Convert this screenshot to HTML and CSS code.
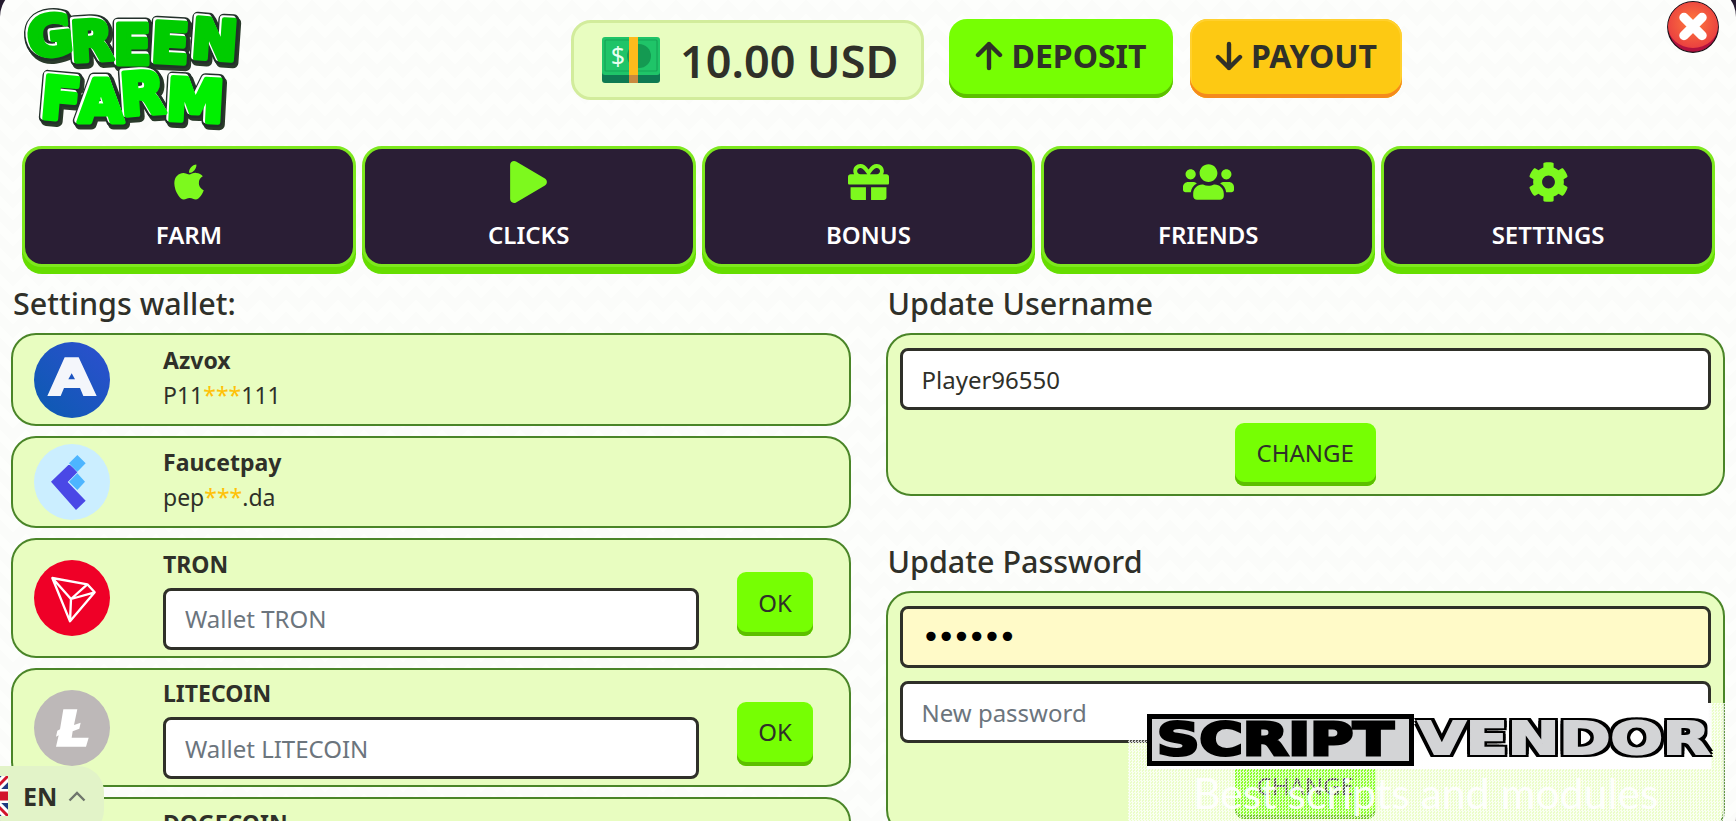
FILE: index.html
```html
<!DOCTYPE html>
<html lang="en">
<head>
<meta charset="utf-8">
<title>Green Farm - Settings</title>
<link rel="stylesheet" href="styles.css">
</head>
<body>
<div class="modal">
  <header class="topbar">
    <svg class="logo" viewBox="0 0 222 126" width="222" height="126" role="img" aria-label="Green Farm">
      <defs>
        <text id="lg" class="logo-green" x="7 49 91 128 168" y="49 53 55 53 49" rotate="-6 -3 0 3 4">GREEN</text>
        <text id="lf" class="logo-farm" x="17 56 99 143" y="109 113 107 111" rotate="5 0 -4 3">FARM</text>
      </defs>
      <use href="#lg" class="lay-shadow"/><use href="#lf" class="lay-shadow"/>
      <use href="#lg" class="lay-dark"/><use href="#lf" class="lay-dark"/>
      <use href="#lg" class="lay-white"/><use href="#lf" class="lay-white"/>
      <use href="#lg" class="lay-g1"/><use href="#lf" class="lay-g2"/>
    </svg>
    <div class="actions">
      <div class="balance">
        <svg class="cash" viewBox="0 0 58 46" width="58" height="46">
          <rect x="0" y="4" width="58" height="42" rx="3" fill="#0e7a52"/>
          <rect x="0" y="0" width="58" height="38" rx="3" fill="#1fc468"/>
          <rect x="3" y="3" width="52" height="31" rx="1" fill="none" stroke="#16a457" stroke-width="1.2"/>
          <circle cx="37" cy="19" r="12" fill="#149a52"/>
          <rect x="27" y="0" width="9" height="38" fill="#fdbb1c"/>
          <rect x="27" y="38" width="9" height="8" fill="#c98a3e"/>
          <text class="cash-sign" x="16" y="28">$</text>
        </svg>
        <span class="balance-text">10.00 USD</span>
      </div>
      <button class="cta cta-deposit">
        <svg viewBox="0 0 28 30" width="28" height="30"><path d="M14 27V3M3 14 14 3l11 11" fill="none" stroke="#2f3029" stroke-width="4.4" stroke-linecap="round" stroke-linejoin="round"/></svg>
        <span>DEPOSIT</span>
      </button>
      <button class="cta cta-payout">
        <svg viewBox="0 0 28 30" width="28" height="30"><path d="M14 3v24M3 16l11 11 11-11" fill="none" stroke="#2f3029" stroke-width="4.4" stroke-linecap="round" stroke-linejoin="round"/></svg>
        <span>PAYOUT</span>
      </button>
    </div>
    <button class="close" aria-label="Close">
      <svg viewBox="0 0 52 52" width="52" height="52">
        <defs>
          <radialGradient id="rg" cx="50%" cy="45%" r="55%"><stop offset="0" stop-color="#ff7b3c"/><stop offset="1" stop-color="#ea4040"/></radialGradient>
        </defs>
        <circle cx="26" cy="26" r="25.3" fill="#b3123f" stroke="#1c1016" stroke-width="1.2"/>
        <path d="M26 1a25 25 0 0 1 25 24 25 22 0 0 1-50 0A25 25 0 0 1 26 1z" fill="url(#rg)"/>
        <path d="M17 16.500 35 34.500M35 16.500 17 34.500" stroke="#fff" stroke-width="9.5" stroke-linecap="round"/>
      </svg>
    </button>
  </header>

  <nav class="nav">
    <a class="nav-card">
      <svg class="nav-ico" viewBox="0 0 384 512" width="30" height="38"><path d="M318.7 268.7c-.2-36.7 16.4-64.4 50-84.8-18.8-26.9-47.2-41.7-84.7-44.6-35.5-2.8-74.3 20.7-88.5 20.7-15 0-49.4-19.7-76.4-19.7C63.3 141.2 4 184.8 4 273.5q0 39.3 14.4 81.2c12.8 36.7 59 126.7 107.2 125.2 25.2-.6 43-17.9 75.8-17.9 31.8 0 48.3 17.9 76.4 17.9 48.6-.7 90.4-82.5 102.6-119.3-65.2-30.7-61.7-90-61.7-91.9zm-56.6-164.2c27.3-32.4 24.8-61.9 24-72.5-24.1 1.4-52 16.4-67.9 34.9-17.5 19.8-27.8 44.3-25.6 71.9 26.1 2 49.9-11.4 69.5-34.3z"/></svg>
      <span>FARM</span>
    </a>
    <a class="nav-card">
      <svg class="nav-ico" viewBox="0 0 448 512" width="37" height="42"><path d="M424.4 214.7L72.4 6.6C43.8-10.3 0 6.1 0 47.9V464c0 37.5 40.7 60.1 72.4 41.3l352-208c31.4-18.5 31.5-64.1 0-82.6z"/></svg>
      <span>CLICKS</span>
    </a>
    <a class="nav-card">
      <svg class="nav-ico" viewBox="0 0 512 512" width="41" height="41"><path d="M32 448c0 17.7 14.3 32 32 32h160V320H32v128zm256 32h160c17.7 0 32-14.3 32-32V320H288v160zm192-320h-42.1c6.2-12.1 10.1-25.5 10.1-40 0-48.5-39.5-88-88-88-41.6 0-68.5 21.3-103 68.3-34.5-47-61.4-68.3-103-68.3-48.5 0-88 39.5-88 88 0 14.5 3.8 27.9 10.1 40H32c-17.7 0-32 14.3-32 32v80c0 8.8 7.2 16 16 16h480c8.8 0 16-7.2 16-16v-80c0-17.7-14.3-32-32-32zm-326.1 0c-22.1 0-40-17.9-40-40s17.9-40 40-40c19.9 0 34.6 3.3 86.1 80h-86.1zm206.1 0h-86.1c51.4-76.5 65.7-80 86.1-80 22.1 0 40 17.9 40 40s-17.9 40-40 40z"/></svg>
      <span>BONUS</span>
    </a>
    <a class="nav-card">
      <svg class="nav-ico" viewBox="0 0 640 512" width="51" height="41"><path d="M96 224c35.3 0 64-28.7 64-64s-28.7-64-64-64-64 28.7-64 64 28.7 64 64 64zm448 0c35.3 0 64-28.7 64-64s-28.7-64-64-64-64 28.7-64 64 28.7 64 64 64zm32 32h-64c-17.6 0-33.5 7.1-45.1 18.6 40.3 22.1 68.9 62 75.1 109.4h66c17.7 0 32-14.3 32-32v-32c0-35.3-28.7-64-64-64zm-256 0c61.9 0 112-50.1 112-112S381.9 32 320 32 208 82.1 208 144s50.1 112 112 112zm76.8 32h-8.3c-20.8 10-43.9 16-68.5 16s-47.6-6-68.5-16h-8.3C179.6 288 128 339.6 128 403.2V432c0 26.5 21.5 48 48 48h288c26.5 0 48-21.5 48-48v-28.8c0-63.6-51.6-115.2-115.2-115.2zm-223.7-13.4C161.5 263.1 145.6 256 128 256H64c-35.3 0-64 28.7-64 64v32c0 17.7 14.3 32 32 32h65.9c6.3-47.4 34.9-87.3 75.2-109.4z"/></svg>
      <span>FRIENDS</span>
    </a>
    <a class="nav-card">
      <svg class="nav-ico" viewBox="0 0 512 512" width="41" height="41"><path d="M487.4 315.7l-42.6-24.6c4.3-23.2 4.3-47 0-70.2l42.6-24.6c4.9-2.8 7.1-8.6 5.5-14-11.1-35.6-30-67.8-54.7-94.6-3.8-4.1-10-5.1-14.8-2.3L380.8 110c-17.9-15.4-38.5-27.3-60.8-35.1V25.8c0-5.6-3.9-10.5-9.4-11.7-36.7-8.2-74.3-7.8-109.2 0-5.5 1.2-9.4 6.1-9.4 11.7V75c-22.2 7.9-42.8 19.8-60.8 35.1L88.7 85.5c-4.9-2.8-11-1.9-14.8 2.3-24.7 26.7-43.6 58.9-54.7 94.6-1.7 5.4.6 11.2 5.5 14L67.3 221c-4.3 23.2-4.3 47 0 70.2l-42.6 24.6c-4.9 2.8-7.1 8.6-5.5 14 11.1 35.6 30 67.8 54.7 94.6 3.8 4.1 10 5.1 14.8 2.3l42.6-24.6c17.9 15.4 38.5 27.3 60.8 35.1v49.2c0 5.6 3.9 10.5 9.4 11.7 36.7 8.2 74.3 7.8 109.2 0 5.5-1.2 9.4-6.1 9.4-11.7v-49.2c22.2-7.9 42.8-19.8 60.8-35.1l42.6 24.6c4.9 2.8 11 1.9 14.8-2.3 24.7-26.7 43.6-58.9 54.7-94.6 1.5-5.5-.7-11.3-5.6-14.1zM256 336c-44.1 0-80-35.9-80-80s35.9-80 80-80 80 35.9 80 80-35.9 80-80 80z"/></svg>
      <span>SETTINGS</span>
    </a>
  </nav>

  <main class="columns">
    <section>
      <h2 class="title">Settings wallet:</h2>

      <div class="panel row">
        <div class="coin-col">
          <svg class="coin" viewBox="0 0 228 228" width="76" height="76">
            <defs><linearGradient id="az" x1="0" y1="1" x2="1" y2="0"><stop offset="0" stop-color="#0a5bb0"/><stop offset="1" stop-color="#2e4fd0"/></linearGradient></defs>
            <circle cx="114" cy="114" r="114" fill="url(#az)"/>
            <path fill="#f4f6fb" fill-rule="evenodd" d="M92 46h42l54 116h-40l-10-24H90l-10 24H40zM113 94l-10 18h20z"/>
          </svg>
        </div>
        <div class="row-body row-body-text">
          <div class="coin-name">Azvox</div>
          <div class="coin-val">P11<span class="stars">***</span>111</div>
        </div>
      </div>

      <div class="panel row">
        <div class="coin-col">
          <svg class="coin" viewBox="0 0 228 228" width="76" height="76">
            <circle cx="114" cy="114" r="114" fill="#cbeeff"/>
            <path fill="#4db5ff" d="M130 33l25 25-25 25-25-25zM130 88l23 25-23 25-25-25z"/>
            <path fill="#4a48e6" d="M103 63 51 113l75 85 29-28-54-56 29-29-12-13-10-9z"/>
          </svg>
        </div>
        <div class="row-body row-body-text">
          <div class="coin-name">Faucetpay</div>
          <div class="coin-val">pep<span class="stars">***</span>.da</div>
        </div>
      </div>

      <div class="panel row">
        <div class="coin-col">
          <svg class="coin" viewBox="0 0 228 228" width="76" height="76">
            <circle cx="114" cy="114" r="114" fill="#ef0027"/>
            <path fill="none" stroke="#fff" stroke-width="7" stroke-linejoin="round" d="M55 54l105 19 22 24-74 87zM55 54l56 63-3 67M111 117l71-20M111 117l49-44"/>
          </svg>
        </div>
        <div class="row-body">
          <div class="coin-name">TRON</div>
          <input class="field" type="text" placeholder="Wallet TRON">
        </div>
        <button class="btn btn-ok">OK</button>
      </div>

      <div class="panel row">
        <div class="coin-col">
          <svg class="coin" viewBox="0 0 228 228" width="76" height="76">
            <circle cx="114" cy="114" r="114" fill="#bdb8b8"/>
            <path fill="#fff" d="M88 58h42l-10 47 20-7-4 18-20 8-3 19h51l-8 27H66l8-34-8 4 4-18 8-4z"/>
          </svg>
        </div>
        <div class="row-body">
          <div class="coin-name">LITECOIN</div>
          <input class="field" type="text" placeholder="Wallet LITECOIN">
        </div>
        <button class="btn btn-ok">OK</button>
      </div>

      <div class="panel row">
        <div class="coin-col"></div>
        <div class="row-body">
          <div class="coin-name">DOGECOIN</div>
          <input class="field" type="text" placeholder="Wallet DOGECOIN">
        </div>
        <button class="btn btn-ok">OK</button>
      </div>
    </section>

    <section>
      <h2 class="title">Update Username</h2>
      <form class="panel form">
        <input class="field" type="text" value="Player96550">
        <button class="btn btn-change" type="button">CHANGE</button>
      </form>

      <h2 class="title title-gap">Update Password</h2>
      <form class="panel form form-last">
        <input class="field field-auto" type="password" value="123456">
        <input class="field" type="password" placeholder="New password">
        <button class="btn btn-change" type="button">CHANGE</button>
      </form>
    </section>
  </main>

  <div class="lang">
    <svg class="flag" viewBox="0 0 40 40" width="40" height="40">
      <rect width="40" height="40" rx="6" fill="#1f3a80"/>
      <path d="M0 0 40 40M40 0 0 40" stroke="#fff" stroke-width="9"/>
      <path d="M0 0 40 40M40 0 0 40" stroke="#d2142c" stroke-width="3"/>
      <path d="M20 0V40M0 20H40" stroke="#fff" stroke-width="14"/>
      <path d="M20 0V40M0 20H40" stroke="#d2142c" stroke-width="9"/>
    </svg>
    <span class="lang-code">EN</span>
    <svg class="chev" viewBox="0 0 18 11" width="18" height="11"><path d="M1.500 9.500 9 2l7.500 7.500" fill="none" stroke="#6f756c" stroke-width="2.4"/></svg>
  </div>

  <aside class="watermark">
    <div class="wm-logo">
      <span class="wm-script"><span class="wm-script-text">SCRIPT</span></span>
      <span class="wm-vendor"><span class="wm-vendor-text">VENDOR</span></span>
    </div>
    <div class="wm-tag">Best scripts and modules</div>
  </aside>
</div>
</body>
</html>
```

FILE: styles.css
```css
* { box-sizing: border-box; }

html, body {
  margin: 0;
  height: 100%;
  overflow: hidden;
  background: #241a2e;
}

body {
  font-family: "Noto Sans", "Open Sans", sans-serif;
  color: #2f3029;
}

.modal {
  position: relative;
  height: 860px;
  margin-top: -13px;
  padding-top: 13px;
  border-radius: 30px;
  overflow: hidden;
  background-color: #fdfefc;
  background-image:
    linear-gradient(135deg, #fbfcfa 25%, transparent 25%),
    linear-gradient(225deg, #fbfcfa 25%, transparent 25%),
    linear-gradient(315deg, #fbfcfa 25%, transparent 25%),
    linear-gradient(45deg, #fbfcfa 25%, transparent 25%);
  background-position: -13px 0, -13px 0, 0 0, 0 0;
  background-size: 26px 26px;
}

/* top bar */
.topbar {
  display: flex;
  align-items: flex-start;
  height: 146px;
  padding-left: 22px;
}

.logo {
  flex: none;
  margin-top: 8px;
}

.logo text {
  font-family: "DejaVu Sans", sans-serif;
  font-weight: 700;
  stroke-linejoin: round;
  stroke-linecap: round;
}

.logo-green { font-size: 55px; }
.logo-farm { font-size: 58px; }

.lay-shadow {
  fill: #2a3a2a;
  stroke: #2a3a2a;
  stroke-width: 11px;
  transform: translate(2px, 3px);
}

.lay-dark {
  fill: #2a3a2a;
  stroke: #23302a;
  stroke-width: 11px;
}

.lay-white {
  fill: #fff;
  stroke: #fff;
  stroke-width: 6px;
  transform: translate(-1px, -1px);
}

.lay-g1 {
  fill: #00cc00;
  stroke: #00cc00;
  stroke-width: 5px;
  transform: translate(.5px, .5px);
}

.lay-g2 {
  fill: #00f000;
  stroke: #00f000;
  stroke-width: 5px;
  transform: translate(.5px, .5px);
}

.actions {
  display: flex;
  align-items: flex-start;
  margin: 19px 0 0 327px;
}

.balance {
  display: flex;
  align-items: center;
  width: 353px;
  height: 80px;
  margin-top: 1px;
  margin-right: 25px;
  padding-left: 28px;
  background: #e8fdc0;
  border: 3px solid #d2ec9c;
  border-radius: 20px;
}

.cash { flex: none; }

.cash-sign {
  font-family: "Noto Sans", sans-serif;
  font-size: 25px;
  fill: #e8fff0;
  text-anchor: middle;
}

.balance-text {
  margin-left: 20px;
  font-size: 45px;
  font-weight: 600;
  line-height: 1;
}

.cta {
  display: flex;
  align-items: center;
  justify-content: center;
  gap: 8px;
  height: 79px;
  padding: 0 0 6px;
  border: 0;
  border-radius: 18px;
  font-family: inherit;
  font-size: 32px;
  font-weight: 700;
  color: #2f3029;
}

.cta-deposit {
  width: 224px;
  margin-right: 17px;
  background: #76ff03;
  box-shadow: inset 0 -4px 0 #5cbf00;
}

.cta-payout {
  width: 212px;
  background: #fdc913;
  box-shadow: inset 0 -4px 0 #f58a1c, inset 0 0 0 2px #ffd02e;
}

.close {
  position: absolute;
  top: 14px;
  right: 17px;
  width: 52px;
  height: 52px;
  padding: 0;
  border: 0;
  background: none;
}

/* main nav */
.nav {
  display: grid;
  grid-template-columns: repeat(5, 1fr);
  gap: 6px;
  padding: 0 21px 0 22px;
}

.nav-card {
  display: flex;
  flex-direction: column;
  align-items: center;
  height: 121px;
  padding-top: 12px;
  background: #2a1e35;
  border: 3px solid #7de81e;
  border-radius: 20px;
  box-shadow: 0 7px 0 #66dd00;
  color: #fff;
  font-size: 24px;
  font-weight: 600;
  line-height: 32px;
}

.nav-ico {
  flex: none;
  height: 42px;
  fill: #7df91e;
}

.nav-card span {
  margin-top: 16px;
}

/* content */
.columns {
  display: grid;
  grid-template-columns: 1fr 1fr;
  gap: 35px;
  padding: 0 11px;
  margin-top: 16px;
}

.title {
  margin: 0 0 10px;
  padding-left: 2px;
  font-size: 30.5px;
  font-weight: 500;
  line-height: 40px;
}

.title-gap {
  margin-top: 45px;
}

.panel {
  background: #e8fdc0;
  border: 2px solid #4a8528;
  border-radius: 25px;
}

.row {
  display: flex;
  align-items: center;
  margin-bottom: 10px;
  padding: 6.5px 0 6px;
}

.coin-col {
  flex: none;
  width: 150px;
  padding-left: 21px;
}

.coin { display: block; }

.row-body {
  flex: none;
  width: 536px;
}

.row-body-text {
  padding-bottom: 4px;
}

.coin-name {
  font-size: 23px;
  font-weight: 700;
  line-height: 35px;
}

.coin-val {
  font-size: 23px;
  line-height: 35px;
}

.stars { color: #ffc107; }

.field {
  display: block;
  width: 100%;
  height: 62px;
  padding: 0 19px;
  background: #fff;
  border: 3px solid #2f3029;
  border-radius: 8px;
  outline: 0;
  font-family: inherit;
  font-size: 24px;
  color: #2f3029;
}

.row-body .field {
  margin-top: 6px;
}

.field::placeholder {
  color: #6c757d;
  opacity: 1;
}

.field-auto {
  background: #fffac8;
  font-family: "DejaVu Sans", sans-serif;
  font-size: 32px;
  letter-spacing: -3.6px;
  color: #000;
}

.btn {
  border: 0;
  background: #76ff03;
  box-shadow: inset 0 -4px 0 #5cbf00;
  border-radius: 9px;
  font-family: inherit;
  font-size: 24px;
  color: #2f3029;
  padding: 0 0 4px;
}

.btn-ok {
  flex: none;
  width: 76px;
  height: 64px;
  margin: 12px 0 0 38px;
}

.form {
  display: flex;
  flex-direction: column;
  align-items: center;
  gap: 13px;
  padding: 13px 12px 8px;
}

.form-last {
  padding-bottom: 14px;
}

.btn-change {
  width: 141px;
  height: 63px;
}

/* language tab */
.lang {
  position: absolute;
  left: 0;
  top: 779px;
  display: flex;
  align-items: center;
  width: 104px;
  height: 70px;
  padding-bottom: 10px;
  overflow: hidden;
  background: #e2f3c8;
  border-radius: 0 26px 26px 0;
}

.flag {
  flex: none;
  margin-left: -32px;
}

.lang-code {
  margin-left: 15px;
  font-size: 25px;
  font-weight: 700;
}

.chev {
  margin-left: 11px;
}

/* watermark */
.watermark {
  position: absolute;
  left: 1128px;
  top: 716px;
  width: 597px;
  height: 118px;
  background-image:
    linear-gradient(90deg, transparent 19px, rgba(255, 255, 255, .98) 19px, rgba(255, 255, 255, .98) 583px, transparent 583px),
    repeating-conic-gradient(rgba(255, 255, 255, .8) 0 25%, rgba(255, 255, 255, .15) 0 50%);
  background-size: 100% 66px, 3px 3px;
  background-repeat: no-repeat, repeat;
}

.wm-logo {
  display: flex;
  align-items: center;
  margin: 11px 0 0 19px;
}

.wm-script {
  display: block;
  flex: none;
  width: 267px;
  height: 52px;
  overflow: hidden;
  background: #d3d4d6;
  border: 5px solid #000;
  font-family: "DejaVu Sans", sans-serif;
  font-weight: 700;
  font-size: 44px;
  line-height: 41px;
  color: #000;
}

.wm-script-text {
  display: inline-block;
  transform: scaleX(1.34);
  transform-origin: 0 50%;
  margin-left: 5px;
  -webkit-text-stroke: 3px #000;
}

.wm-vendor {
  display: block;
  flex: none;
  width: 303px;
  height: 52px;
  padding-left: 4px;
  font-family: "DejaVu Sans", sans-serif;
  font-weight: 700;
  font-size: 44px;
  line-height: 50px;
  color: #d3d4d6;
}

.wm-vendor-text {
  display: inline-block;
  transform: scaleX(1.4);
  transform-origin: 0 50%;
  -webkit-text-stroke: 2px #d3d4d6;
  text-shadow: 3px 0 0 #000, -3px 0 0 #000, 0 3px 0 #000, 0 -3px 0 #000, 3px 3px 0 #000, -3px 3px 0 #000, 3px -3px 0 #000, -3px -3px 0 #000;
}

.wm-tag {
  margin: 5px 0 0 65px;
  font-family: "Lato", sans-serif;
  font-size: 42.7px;
  line-height: 44px;
  color: rgba(255, 255, 255, .92);
  white-space: nowrap;
}
```
